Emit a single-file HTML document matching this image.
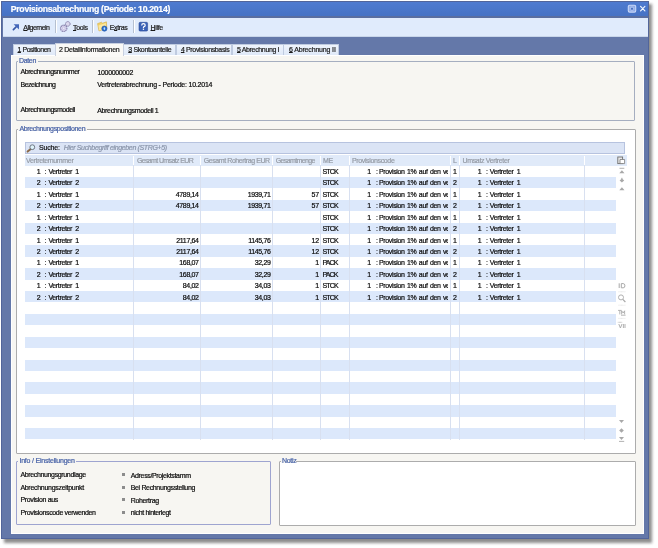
<!DOCTYPE html>
<html><head><meta charset="utf-8"><style>
html,body{margin:0;padding:0;}
body{width:658px;height:548px;position:relative;overflow:hidden;background:#ffffff;font-family:"Liberation Sans",sans-serif;}
.r{position:absolute;}
.t{position:absolute;white-space:pre;-webkit-text-stroke:0.2px currentColor;}
u{text-decoration:underline;text-underline-offset:0.3px;text-decoration-thickness:1px;}
#w{position:absolute;left:0;top:0;width:658px;height:548px;will-change:transform;}
</style></head><body><div id="w">
<div class="r" style="left:4.00px;top:4.00px;width:648.00px;height:539.00px;background:#707070;filter:blur(1.6px);opacity:.8"></div>
<div class="r" style="left:1.00px;top:1.00px;width:648.00px;height:538.00px;background:#6478a9;border:1px solid #52659a;box-sizing:border-box"></div>
<div class="r" style="left:2.00px;top:2.00px;width:646.00px;height:14.00px;background:linear-gradient(#4f7bd0,#4672c4)"></div>
<div class="r" style="left:2.00px;top:16.00px;width:646.00px;height:1.50px;background:#5a6ea0"></div>
<div class="t" style="left:10.80px;top:4.54px;font-size:8.7px;line-height:8.7px;color:#ffffff;letter-spacing:-0.3px;font-weight:bold">Provisionsabrechnung (Periode: 10.2014)</div>
<div class="r" style="left:3.00px;top:17.50px;width:645.00px;height:18.00px;background:#e0ebfc"></div>
<div class="r" style="left:3.00px;top:35.50px;width:645.00px;height:1.00px;background:#c9d6ea"></div>
<div class="r" style="left:55.00px;top:19.60px;width:1.00px;height:13.20px;background:#b6c0d0;box-shadow:1px 0 0 #ffffff"></div>
<div class="r" style="left:92.20px;top:19.60px;width:1.00px;height:13.20px;background:#b6c0d0;box-shadow:1px 0 0 #ffffff"></div>
<div class="r" style="left:133.00px;top:19.60px;width:1.00px;height:13.20px;background:#b6c0d0;box-shadow:1px 0 0 #ffffff"></div>
<div class="t" style="left:23.30px;top:23.57px;font-size:7.0px;line-height:7.0px;color:#1a1a1a;letter-spacing:-0.51px"><u>A</u>llgemein</div>
<div class="t" style="left:73.00px;top:23.57px;font-size:7.0px;line-height:7.0px;color:#1a1a1a;letter-spacing:-0.35px"><u>T</u>ools</div>
<div class="t" style="left:109.75px;top:23.57px;font-size:7.0px;line-height:7.0px;color:#1a1a1a;letter-spacing:-0.35px">E<u>x</u>tras</div>
<div class="t" style="left:150.50px;top:23.57px;font-size:7.0px;line-height:7.0px;color:#1a1a1a;letter-spacing:-0.35px"><u>H</u>ilfe</div>
<div class="r" style="left:12.50px;top:44.25px;width:43.00px;height:11.25px;background:linear-gradient(#eef4fc,#dfe9f8);border:1px solid #bfcbe0;border-bottom:1px solid #c3c9d4;box-sizing:border-box"></div>
<div class="t" style="left:17.50px;top:46.42px;font-size:7.0px;line-height:7.0px;color:#1a1a1a;letter-spacing:-0.46px"><u>1</u> Positionen</div>
<div class="r" style="left:123.00px;top:44.25px;width:53.30px;height:11.25px;background:linear-gradient(#eef4fc,#dfe9f8);border:1px solid #bfcbe0;border-bottom:1px solid #c3c9d4;box-sizing:border-box"></div>
<div class="t" style="left:128.25px;top:46.42px;font-size:7.0px;line-height:7.0px;color:#1a1a1a;letter-spacing:-0.35px"><u>3</u> Skontoanteile</div>
<div class="r" style="left:176.00px;top:44.25px;width:55.80px;height:11.25px;background:linear-gradient(#eef4fc,#dfe9f8);border:1px solid #bfcbe0;border-bottom:1px solid #c3c9d4;box-sizing:border-box"></div>
<div class="t" style="left:180.90px;top:46.42px;font-size:7.0px;line-height:7.0px;color:#1a1a1a;letter-spacing:-0.35px"><u>4</u> Provisionsbasis</div>
<div class="r" style="left:231.50px;top:44.25px;width:52.00px;height:11.25px;background:linear-gradient(#eef4fc,#dfe9f8);border:1px solid #bfcbe0;border-bottom:1px solid #c3c9d4;box-sizing:border-box"></div>
<div class="t" style="left:237.00px;top:46.42px;font-size:7.0px;line-height:7.0px;color:#1a1a1a;letter-spacing:-0.35px"><u>5</u> Abrechnung I</div>
<div class="r" style="left:283.20px;top:44.25px;width:55.80px;height:11.25px;background:linear-gradient(#eef4fc,#dfe9f8);border:1px solid #bfcbe0;border-bottom:1px solid #c3c9d4;box-sizing:border-box"></div>
<div class="t" style="left:289.00px;top:46.42px;font-size:7.0px;line-height:7.0px;color:#1a1a1a;letter-spacing:-0.157px"><u>6</u> Abrechnung II</div>
<div class="r" style="left:11.00px;top:55.00px;width:633.00px;height:479.00px;background:#f7f6f2;border:1px solid #ffffff;box-sizing:border-box"></div>
<div class="r" style="left:55.00px;top:43.00px;width:68.50px;height:13.00px;background:#faf9f6;border:1px solid #c8d0e0;border-bottom:none;box-sizing:border-box"></div>
<div class="t" style="left:59.00px;top:45.67px;font-size:7.0px;line-height:7.0px;color:#1a1a1a;letter-spacing:-0.275px">2 Detailinformationen</div>
<div class="r" style="left:56.00px;top:54.00px;width:67.00px;height:3.00px;background:#faf9f6"></div>
<div class="r" style="left:16.25px;top:61.00px;width:618.75px;height:60.20px;border:1px solid #a5aec0;border-radius:1px;box-sizing:border-box"></div>
<div class="r" style="left:18.00px;top:58.00px;width:19.50px;height:5.00px;background:#f7f6f2"></div>
<div class="t" style="left:19.00px;top:57.07px;font-size:7.0px;line-height:7.0px;color:#4560a6;letter-spacing:-0.35px">Daten</div>
<div class="t" style="left:20.60px;top:68.07px;font-size:7.0px;line-height:7.0px;color:#0a0a0a;letter-spacing:-0.475px">Abrechnungsnummer</div>
<div class="t" style="left:97.50px;top:68.77px;font-size:7.0px;line-height:7.0px;color:#0a0a0a;letter-spacing:-0.35px">1000000002</div>
<div class="t" style="left:20.50px;top:81.07px;font-size:7.0px;line-height:7.0px;color:#0a0a0a;letter-spacing:-0.5px">Bezeichnung</div>
<div class="t" style="left:97.25px;top:81.17px;font-size:7.0px;line-height:7.0px;color:#0a0a0a;letter-spacing:-0.22px">Vertreterabrechnung - Periode: 10.2014</div>
<div class="t" style="left:20.60px;top:106.37px;font-size:7.0px;line-height:7.0px;color:#0a0a0a;letter-spacing:-0.45px">Abrechnungsmodell</div>
<div class="t" style="left:97.25px;top:106.57px;font-size:7.0px;line-height:7.0px;color:#0a0a0a;letter-spacing:-0.35px">Abrechnungsmodell 1</div>
<div class="r" style="left:16.00px;top:129.20px;width:619.80px;height:324.40px;background:#ffffff;border:1px solid #acacac;border-radius:1px;box-sizing:border-box"></div>
<div class="r" style="left:18.00px;top:125.00px;width:68.50px;height:5.50px;background:#f7f6f2"></div>
<div class="t" style="left:19.40px;top:124.97px;font-size:7.0px;line-height:7.0px;color:#4560a6;letter-spacing:-0.35px">Abrechnungspositionen</div>
<div class="r" style="left:24.75px;top:142.00px;width:600.65px;height:12.00px;background:#dbe4f5;border:1px solid #b7c3df;box-sizing:border-box"></div>
<div class="t" style="left:39.10px;top:144.07px;font-size:7.0px;line-height:7.0px;color:#111111;letter-spacing:-0.2px">Suche:</div>
<div class="t" style="left:63.75px;top:144.37px;font-size:7.0px;line-height:7.0px;color:#8a95aa;letter-spacing:-0.35px;font-style:italic">Hier Suchbegriff eingeben (STRG+5)</div>
<div class="r" style="left:24.90px;top:155.00px;width:602.10px;height:10.60px;background:#e0eaf9"></div>
<div class="r" style="left:133.00px;top:156.00px;width:1.00px;height:9.60px;background:#ffffff"></div>
<div class="r" style="left:200.00px;top:156.00px;width:1.00px;height:9.60px;background:#ffffff"></div>
<div class="r" style="left:272.00px;top:156.00px;width:1.00px;height:9.60px;background:#ffffff"></div>
<div class="r" style="left:320.00px;top:156.00px;width:1.00px;height:9.60px;background:#ffffff"></div>
<div class="r" style="left:349.00px;top:156.00px;width:1.00px;height:9.60px;background:#ffffff"></div>
<div class="r" style="left:450.00px;top:156.00px;width:1.00px;height:9.60px;background:#ffffff"></div>
<div class="r" style="left:459.00px;top:156.00px;width:1.00px;height:9.60px;background:#ffffff"></div>
<div class="r" style="left:584.00px;top:156.00px;width:1.00px;height:9.60px;background:#ffffff"></div>
<div class="t" style="left:26.10px;top:156.67px;font-size:7.0px;line-height:7.0px;color:#959ba5;letter-spacing:-0.35px">Vertreternummer</div>
<div class="t" style="left:136.90px;top:156.67px;font-size:7.0px;line-height:7.0px;color:#959ba5;letter-spacing:-0.63px">Gesamt Umsatz EUR</div>
<div class="t" style="left:203.75px;top:156.67px;font-size:7.0px;line-height:7.0px;color:#959ba5;letter-spacing:-0.42px">Gesamt Rohertrag EUR</div>
<div class="t" style="left:275.75px;top:156.67px;font-size:7.0px;line-height:7.0px;color:#959ba5;letter-spacing:-0.615px">Gesamtmenge</div>
<div class="t" style="left:323.00px;top:156.67px;font-size:7.0px;line-height:7.0px;color:#959ba5;letter-spacing:-0.35px">ME</div>
<div class="t" style="left:351.90px;top:156.67px;font-size:7.0px;line-height:7.0px;color:#959ba5;letter-spacing:-0.35px">Provisionscode</div>
<div class="t" style="left:453.10px;top:156.67px;font-size:7.0px;line-height:7.0px;color:#959ba5;letter-spacing:-0.35px">L</div>
<div class="t" style="left:462.50px;top:156.67px;font-size:7.0px;line-height:7.0px;color:#959ba5;letter-spacing:-0.35px">Umsatz Vertreter</div>
<div class="r" style="left:24.90px;top:176.82px;width:591.10px;height:11.42px;background:#dce8fb"></div>
<div class="r" style="left:24.90px;top:199.66px;width:591.10px;height:11.42px;background:#dce8fb"></div>
<div class="r" style="left:24.90px;top:222.50px;width:591.10px;height:11.42px;background:#dce8fb"></div>
<div class="r" style="left:24.90px;top:245.34px;width:591.10px;height:11.42px;background:#dce8fb"></div>
<div class="r" style="left:24.90px;top:268.18px;width:591.10px;height:11.42px;background:#dce8fb"></div>
<div class="r" style="left:24.90px;top:291.02px;width:591.10px;height:11.42px;background:#dce8fb"></div>
<div class="r" style="left:24.90px;top:313.86px;width:591.10px;height:11.42px;background:#dce8fb"></div>
<div class="r" style="left:24.90px;top:336.70px;width:591.10px;height:11.42px;background:#dce8fb"></div>
<div class="r" style="left:24.90px;top:359.54px;width:591.10px;height:11.42px;background:#dce8fb"></div>
<div class="r" style="left:24.90px;top:382.38px;width:591.10px;height:11.42px;background:#dce8fb"></div>
<div class="r" style="left:24.90px;top:405.22px;width:591.10px;height:11.42px;background:#dce8fb"></div>
<div class="r" style="left:24.90px;top:428.06px;width:591.10px;height:11.42px;background:#dce8fb"></div>
<div class="r" style="left:133.00px;top:165.40px;width:1.00px;height:275.10px;background:#d8e0f0"></div>
<div class="r" style="left:200.00px;top:165.40px;width:1.00px;height:275.10px;background:#d8e0f0"></div>
<div class="r" style="left:272.00px;top:165.40px;width:1.00px;height:275.10px;background:#d8e0f0"></div>
<div class="r" style="left:320.00px;top:165.40px;width:1.00px;height:275.10px;background:#d8e0f0"></div>
<div class="r" style="left:349.00px;top:165.40px;width:1.00px;height:275.10px;background:#d8e0f0"></div>
<div class="r" style="left:450.00px;top:165.40px;width:1.00px;height:275.10px;background:#d8e0f0"></div>
<div class="r" style="left:459.00px;top:165.40px;width:1.00px;height:275.10px;background:#d8e0f0"></div>
<div class="r" style="left:584.00px;top:165.40px;width:1.00px;height:275.10px;background:#d8e0f0"></div>
<div class="t" style="right:617.60px;top:168.07px;font-size:7.0px;line-height:7.0px;color:#0a0a0a;letter-spacing:-0.35px;text-align:right">1</div>
<div class="t" style="left:44.60px;top:168.07px;font-size:7.0px;line-height:7.0px;color:#0a0a0a;letter-spacing:-0.35px">:</div>
<div class="t" style="left:48.40px;top:168.07px;font-size:7.0px;line-height:7.0px;color:#0a0a0a;letter-spacing:-0.35px;word-spacing:1.6px">Vertreter 1</div>
<div class="t" style="left:322.40px;top:168.07px;font-size:7.0px;line-height:7.0px;color:#0a0a0a;letter-spacing:-0.8px">STCK</div>
<div class="t" style="right:287.20px;top:168.07px;font-size:7.0px;line-height:7.0px;color:#0a0a0a;letter-spacing:-0.35px;text-align:right">1</div>
<div class="t" style="left:376.00px;top:168.07px;font-size:7.0px;line-height:7.0px;color:#0a0a0a;letter-spacing:-0.35px">:</div>
<div class="t" style="left:379px;top:168.07px;width:69px;overflow:hidden;font-size:7.0px;line-height:7.0px;color:#0a0a0a;letter-spacing:-0.35px;word-spacing:0.8px">Provision 1% auf den verkauften Umsatz</div>
<div class="t" style="left:453.00px;top:168.07px;font-size:7.0px;line-height:7.0px;color:#0a0a0a;letter-spacing:-0.35px">1</div>
<div class="t" style="right:176.70px;top:168.07px;font-size:7.0px;line-height:7.0px;color:#0a0a0a;letter-spacing:-0.35px;text-align:right">1</div>
<div class="t" style="left:486.00px;top:168.07px;font-size:7.0px;line-height:7.0px;color:#0a0a0a;letter-spacing:-0.35px">:</div>
<div class="t" style="left:489.80px;top:168.07px;font-size:7.0px;line-height:7.0px;color:#0a0a0a;letter-spacing:-0.35px;word-spacing:1.6px">Vertreter 1</div>
<div class="t" style="right:617.60px;top:179.49px;font-size:7.0px;line-height:7.0px;color:#0a0a0a;letter-spacing:-0.35px;text-align:right">2</div>
<div class="t" style="left:44.60px;top:179.49px;font-size:7.0px;line-height:7.0px;color:#0a0a0a;letter-spacing:-0.35px">:</div>
<div class="t" style="left:48.40px;top:179.49px;font-size:7.0px;line-height:7.0px;color:#0a0a0a;letter-spacing:-0.35px;word-spacing:1.6px">Vertreter 2</div>
<div class="t" style="left:322.40px;top:179.49px;font-size:7.0px;line-height:7.0px;color:#0a0a0a;letter-spacing:-0.8px">STCK</div>
<div class="t" style="right:287.20px;top:179.49px;font-size:7.0px;line-height:7.0px;color:#0a0a0a;letter-spacing:-0.35px;text-align:right">1</div>
<div class="t" style="left:376.00px;top:179.49px;font-size:7.0px;line-height:7.0px;color:#0a0a0a;letter-spacing:-0.35px">:</div>
<div class="t" style="left:379px;top:179.49px;width:69px;overflow:hidden;font-size:7.0px;line-height:7.0px;color:#0a0a0a;letter-spacing:-0.35px;word-spacing:0.8px">Provision 1% auf den verkauften Umsatz</div>
<div class="t" style="left:453.00px;top:179.49px;font-size:7.0px;line-height:7.0px;color:#0a0a0a;letter-spacing:-0.35px">2</div>
<div class="t" style="right:176.70px;top:179.49px;font-size:7.0px;line-height:7.0px;color:#0a0a0a;letter-spacing:-0.35px;text-align:right">1</div>
<div class="t" style="left:486.00px;top:179.49px;font-size:7.0px;line-height:7.0px;color:#0a0a0a;letter-spacing:-0.35px">:</div>
<div class="t" style="left:489.80px;top:179.49px;font-size:7.0px;line-height:7.0px;color:#0a0a0a;letter-spacing:-0.35px;word-spacing:1.6px">Vertreter 1</div>
<div class="t" style="right:617.60px;top:190.91px;font-size:7.0px;line-height:7.0px;color:#0a0a0a;letter-spacing:-0.35px;text-align:right">1</div>
<div class="t" style="left:44.60px;top:190.91px;font-size:7.0px;line-height:7.0px;color:#0a0a0a;letter-spacing:-0.35px">:</div>
<div class="t" style="left:48.40px;top:190.91px;font-size:7.0px;line-height:7.0px;color:#0a0a0a;letter-spacing:-0.35px;word-spacing:1.6px">Vertreter 1</div>
<div class="t" style="right:459.40px;top:190.91px;font-size:7.0px;line-height:7.0px;color:#0a0a0a;letter-spacing:-0.35px;text-align:right">4789,14</div>
<div class="t" style="right:387.50px;top:190.91px;font-size:7.0px;line-height:7.0px;color:#0a0a0a;letter-spacing:-0.35px;text-align:right">1939,71</div>
<div class="t" style="right:339.30px;top:190.91px;font-size:7.0px;line-height:7.0px;color:#0a0a0a;letter-spacing:-0.35px;text-align:right">57</div>
<div class="t" style="left:322.40px;top:190.91px;font-size:7.0px;line-height:7.0px;color:#0a0a0a;letter-spacing:-0.8px">STCK</div>
<div class="t" style="right:287.20px;top:190.91px;font-size:7.0px;line-height:7.0px;color:#0a0a0a;letter-spacing:-0.35px;text-align:right">1</div>
<div class="t" style="left:376.00px;top:190.91px;font-size:7.0px;line-height:7.0px;color:#0a0a0a;letter-spacing:-0.35px">:</div>
<div class="t" style="left:379px;top:190.91px;width:69px;overflow:hidden;font-size:7.0px;line-height:7.0px;color:#0a0a0a;letter-spacing:-0.35px;word-spacing:0.8px">Provision 1% auf den verkauften Umsatz</div>
<div class="t" style="left:453.00px;top:190.91px;font-size:7.0px;line-height:7.0px;color:#0a0a0a;letter-spacing:-0.35px">1</div>
<div class="t" style="right:176.70px;top:190.91px;font-size:7.0px;line-height:7.0px;color:#0a0a0a;letter-spacing:-0.35px;text-align:right">1</div>
<div class="t" style="left:486.00px;top:190.91px;font-size:7.0px;line-height:7.0px;color:#0a0a0a;letter-spacing:-0.35px">:</div>
<div class="t" style="left:489.80px;top:190.91px;font-size:7.0px;line-height:7.0px;color:#0a0a0a;letter-spacing:-0.35px;word-spacing:1.6px">Vertreter 1</div>
<div class="t" style="right:617.60px;top:202.33px;font-size:7.0px;line-height:7.0px;color:#0a0a0a;letter-spacing:-0.35px;text-align:right">2</div>
<div class="t" style="left:44.60px;top:202.33px;font-size:7.0px;line-height:7.0px;color:#0a0a0a;letter-spacing:-0.35px">:</div>
<div class="t" style="left:48.40px;top:202.33px;font-size:7.0px;line-height:7.0px;color:#0a0a0a;letter-spacing:-0.35px;word-spacing:1.6px">Vertreter 2</div>
<div class="t" style="right:459.40px;top:202.33px;font-size:7.0px;line-height:7.0px;color:#0a0a0a;letter-spacing:-0.35px;text-align:right">4789,14</div>
<div class="t" style="right:387.50px;top:202.33px;font-size:7.0px;line-height:7.0px;color:#0a0a0a;letter-spacing:-0.35px;text-align:right">1939,71</div>
<div class="t" style="right:339.30px;top:202.33px;font-size:7.0px;line-height:7.0px;color:#0a0a0a;letter-spacing:-0.35px;text-align:right">57</div>
<div class="t" style="left:322.40px;top:202.33px;font-size:7.0px;line-height:7.0px;color:#0a0a0a;letter-spacing:-0.8px">STCK</div>
<div class="t" style="right:287.20px;top:202.33px;font-size:7.0px;line-height:7.0px;color:#0a0a0a;letter-spacing:-0.35px;text-align:right">1</div>
<div class="t" style="left:376.00px;top:202.33px;font-size:7.0px;line-height:7.0px;color:#0a0a0a;letter-spacing:-0.35px">:</div>
<div class="t" style="left:379px;top:202.33px;width:69px;overflow:hidden;font-size:7.0px;line-height:7.0px;color:#0a0a0a;letter-spacing:-0.35px;word-spacing:0.8px">Provision 1% auf den verkauften Umsatz</div>
<div class="t" style="left:453.00px;top:202.33px;font-size:7.0px;line-height:7.0px;color:#0a0a0a;letter-spacing:-0.35px">2</div>
<div class="t" style="right:176.70px;top:202.33px;font-size:7.0px;line-height:7.0px;color:#0a0a0a;letter-spacing:-0.35px;text-align:right">1</div>
<div class="t" style="left:486.00px;top:202.33px;font-size:7.0px;line-height:7.0px;color:#0a0a0a;letter-spacing:-0.35px">:</div>
<div class="t" style="left:489.80px;top:202.33px;font-size:7.0px;line-height:7.0px;color:#0a0a0a;letter-spacing:-0.35px;word-spacing:1.6px">Vertreter 1</div>
<div class="t" style="right:617.60px;top:213.75px;font-size:7.0px;line-height:7.0px;color:#0a0a0a;letter-spacing:-0.35px;text-align:right">1</div>
<div class="t" style="left:44.60px;top:213.75px;font-size:7.0px;line-height:7.0px;color:#0a0a0a;letter-spacing:-0.35px">:</div>
<div class="t" style="left:48.40px;top:213.75px;font-size:7.0px;line-height:7.0px;color:#0a0a0a;letter-spacing:-0.35px;word-spacing:1.6px">Vertreter 1</div>
<div class="t" style="left:322.40px;top:213.75px;font-size:7.0px;line-height:7.0px;color:#0a0a0a;letter-spacing:-0.8px">STCK</div>
<div class="t" style="right:287.20px;top:213.75px;font-size:7.0px;line-height:7.0px;color:#0a0a0a;letter-spacing:-0.35px;text-align:right">1</div>
<div class="t" style="left:376.00px;top:213.75px;font-size:7.0px;line-height:7.0px;color:#0a0a0a;letter-spacing:-0.35px">:</div>
<div class="t" style="left:379px;top:213.75px;width:69px;overflow:hidden;font-size:7.0px;line-height:7.0px;color:#0a0a0a;letter-spacing:-0.35px;word-spacing:0.8px">Provision 1% auf den verkauften Umsatz</div>
<div class="t" style="left:453.00px;top:213.75px;font-size:7.0px;line-height:7.0px;color:#0a0a0a;letter-spacing:-0.35px">1</div>
<div class="t" style="right:176.70px;top:213.75px;font-size:7.0px;line-height:7.0px;color:#0a0a0a;letter-spacing:-0.35px;text-align:right">1</div>
<div class="t" style="left:486.00px;top:213.75px;font-size:7.0px;line-height:7.0px;color:#0a0a0a;letter-spacing:-0.35px">:</div>
<div class="t" style="left:489.80px;top:213.75px;font-size:7.0px;line-height:7.0px;color:#0a0a0a;letter-spacing:-0.35px;word-spacing:1.6px">Vertreter 1</div>
<div class="t" style="right:617.60px;top:225.17px;font-size:7.0px;line-height:7.0px;color:#0a0a0a;letter-spacing:-0.35px;text-align:right">2</div>
<div class="t" style="left:44.60px;top:225.17px;font-size:7.0px;line-height:7.0px;color:#0a0a0a;letter-spacing:-0.35px">:</div>
<div class="t" style="left:48.40px;top:225.17px;font-size:7.0px;line-height:7.0px;color:#0a0a0a;letter-spacing:-0.35px;word-spacing:1.6px">Vertreter 2</div>
<div class="t" style="left:322.40px;top:225.17px;font-size:7.0px;line-height:7.0px;color:#0a0a0a;letter-spacing:-0.8px">STCK</div>
<div class="t" style="right:287.20px;top:225.17px;font-size:7.0px;line-height:7.0px;color:#0a0a0a;letter-spacing:-0.35px;text-align:right">1</div>
<div class="t" style="left:376.00px;top:225.17px;font-size:7.0px;line-height:7.0px;color:#0a0a0a;letter-spacing:-0.35px">:</div>
<div class="t" style="left:379px;top:225.17px;width:69px;overflow:hidden;font-size:7.0px;line-height:7.0px;color:#0a0a0a;letter-spacing:-0.35px;word-spacing:0.8px">Provision 1% auf den verkauften Umsatz</div>
<div class="t" style="left:453.00px;top:225.17px;font-size:7.0px;line-height:7.0px;color:#0a0a0a;letter-spacing:-0.35px">2</div>
<div class="t" style="right:176.70px;top:225.17px;font-size:7.0px;line-height:7.0px;color:#0a0a0a;letter-spacing:-0.35px;text-align:right">1</div>
<div class="t" style="left:486.00px;top:225.17px;font-size:7.0px;line-height:7.0px;color:#0a0a0a;letter-spacing:-0.35px">:</div>
<div class="t" style="left:489.80px;top:225.17px;font-size:7.0px;line-height:7.0px;color:#0a0a0a;letter-spacing:-0.35px;word-spacing:1.6px">Vertreter 1</div>
<div class="t" style="right:617.60px;top:236.59px;font-size:7.0px;line-height:7.0px;color:#0a0a0a;letter-spacing:-0.35px;text-align:right">1</div>
<div class="t" style="left:44.60px;top:236.59px;font-size:7.0px;line-height:7.0px;color:#0a0a0a;letter-spacing:-0.35px">:</div>
<div class="t" style="left:48.40px;top:236.59px;font-size:7.0px;line-height:7.0px;color:#0a0a0a;letter-spacing:-0.35px;word-spacing:1.6px">Vertreter 1</div>
<div class="t" style="right:459.40px;top:236.59px;font-size:7.0px;line-height:7.0px;color:#0a0a0a;letter-spacing:-0.35px;text-align:right">2117,64</div>
<div class="t" style="right:387.50px;top:236.59px;font-size:7.0px;line-height:7.0px;color:#0a0a0a;letter-spacing:-0.35px;text-align:right">1145,76</div>
<div class="t" style="right:339.30px;top:236.59px;font-size:7.0px;line-height:7.0px;color:#0a0a0a;letter-spacing:-0.35px;text-align:right">12</div>
<div class="t" style="left:322.40px;top:236.59px;font-size:7.0px;line-height:7.0px;color:#0a0a0a;letter-spacing:-0.8px">STCK</div>
<div class="t" style="right:287.20px;top:236.59px;font-size:7.0px;line-height:7.0px;color:#0a0a0a;letter-spacing:-0.35px;text-align:right">1</div>
<div class="t" style="left:376.00px;top:236.59px;font-size:7.0px;line-height:7.0px;color:#0a0a0a;letter-spacing:-0.35px">:</div>
<div class="t" style="left:379px;top:236.59px;width:69px;overflow:hidden;font-size:7.0px;line-height:7.0px;color:#0a0a0a;letter-spacing:-0.35px;word-spacing:0.8px">Provision 1% auf den verkauften Umsatz</div>
<div class="t" style="left:453.00px;top:236.59px;font-size:7.0px;line-height:7.0px;color:#0a0a0a;letter-spacing:-0.35px">1</div>
<div class="t" style="right:176.70px;top:236.59px;font-size:7.0px;line-height:7.0px;color:#0a0a0a;letter-spacing:-0.35px;text-align:right">1</div>
<div class="t" style="left:486.00px;top:236.59px;font-size:7.0px;line-height:7.0px;color:#0a0a0a;letter-spacing:-0.35px">:</div>
<div class="t" style="left:489.80px;top:236.59px;font-size:7.0px;line-height:7.0px;color:#0a0a0a;letter-spacing:-0.35px;word-spacing:1.6px">Vertreter 1</div>
<div class="t" style="right:617.60px;top:248.01px;font-size:7.0px;line-height:7.0px;color:#0a0a0a;letter-spacing:-0.35px;text-align:right">2</div>
<div class="t" style="left:44.60px;top:248.01px;font-size:7.0px;line-height:7.0px;color:#0a0a0a;letter-spacing:-0.35px">:</div>
<div class="t" style="left:48.40px;top:248.01px;font-size:7.0px;line-height:7.0px;color:#0a0a0a;letter-spacing:-0.35px;word-spacing:1.6px">Vertreter 2</div>
<div class="t" style="right:459.40px;top:248.01px;font-size:7.0px;line-height:7.0px;color:#0a0a0a;letter-spacing:-0.35px;text-align:right">2117,64</div>
<div class="t" style="right:387.50px;top:248.01px;font-size:7.0px;line-height:7.0px;color:#0a0a0a;letter-spacing:-0.35px;text-align:right">1145,76</div>
<div class="t" style="right:339.30px;top:248.01px;font-size:7.0px;line-height:7.0px;color:#0a0a0a;letter-spacing:-0.35px;text-align:right">12</div>
<div class="t" style="left:322.40px;top:248.01px;font-size:7.0px;line-height:7.0px;color:#0a0a0a;letter-spacing:-0.8px">STCK</div>
<div class="t" style="right:287.20px;top:248.01px;font-size:7.0px;line-height:7.0px;color:#0a0a0a;letter-spacing:-0.35px;text-align:right">1</div>
<div class="t" style="left:376.00px;top:248.01px;font-size:7.0px;line-height:7.0px;color:#0a0a0a;letter-spacing:-0.35px">:</div>
<div class="t" style="left:379px;top:248.01px;width:69px;overflow:hidden;font-size:7.0px;line-height:7.0px;color:#0a0a0a;letter-spacing:-0.35px;word-spacing:0.8px">Provision 1% auf den verkauften Umsatz</div>
<div class="t" style="left:453.00px;top:248.01px;font-size:7.0px;line-height:7.0px;color:#0a0a0a;letter-spacing:-0.35px">2</div>
<div class="t" style="right:176.70px;top:248.01px;font-size:7.0px;line-height:7.0px;color:#0a0a0a;letter-spacing:-0.35px;text-align:right">1</div>
<div class="t" style="left:486.00px;top:248.01px;font-size:7.0px;line-height:7.0px;color:#0a0a0a;letter-spacing:-0.35px">:</div>
<div class="t" style="left:489.80px;top:248.01px;font-size:7.0px;line-height:7.0px;color:#0a0a0a;letter-spacing:-0.35px;word-spacing:1.6px">Vertreter 1</div>
<div class="t" style="right:617.60px;top:259.43px;font-size:7.0px;line-height:7.0px;color:#0a0a0a;letter-spacing:-0.35px;text-align:right">1</div>
<div class="t" style="left:44.60px;top:259.43px;font-size:7.0px;line-height:7.0px;color:#0a0a0a;letter-spacing:-0.35px">:</div>
<div class="t" style="left:48.40px;top:259.43px;font-size:7.0px;line-height:7.0px;color:#0a0a0a;letter-spacing:-0.35px;word-spacing:1.6px">Vertreter 1</div>
<div class="t" style="right:459.40px;top:259.43px;font-size:7.0px;line-height:7.0px;color:#0a0a0a;letter-spacing:-0.35px;text-align:right">168,07</div>
<div class="t" style="right:387.50px;top:259.43px;font-size:7.0px;line-height:7.0px;color:#0a0a0a;letter-spacing:-0.35px;text-align:right">32,29</div>
<div class="t" style="right:339.30px;top:259.43px;font-size:7.0px;line-height:7.0px;color:#0a0a0a;letter-spacing:-0.35px;text-align:right">1</div>
<div class="t" style="left:322.40px;top:259.43px;font-size:7.0px;line-height:7.0px;color:#0a0a0a;letter-spacing:-0.8px">PACK</div>
<div class="t" style="right:287.20px;top:259.43px;font-size:7.0px;line-height:7.0px;color:#0a0a0a;letter-spacing:-0.35px;text-align:right">1</div>
<div class="t" style="left:376.00px;top:259.43px;font-size:7.0px;line-height:7.0px;color:#0a0a0a;letter-spacing:-0.35px">:</div>
<div class="t" style="left:379px;top:259.43px;width:69px;overflow:hidden;font-size:7.0px;line-height:7.0px;color:#0a0a0a;letter-spacing:-0.35px;word-spacing:0.8px">Provision 1% auf den verkauften Umsatz</div>
<div class="t" style="left:453.00px;top:259.43px;font-size:7.0px;line-height:7.0px;color:#0a0a0a;letter-spacing:-0.35px">1</div>
<div class="t" style="right:176.70px;top:259.43px;font-size:7.0px;line-height:7.0px;color:#0a0a0a;letter-spacing:-0.35px;text-align:right">1</div>
<div class="t" style="left:486.00px;top:259.43px;font-size:7.0px;line-height:7.0px;color:#0a0a0a;letter-spacing:-0.35px">:</div>
<div class="t" style="left:489.80px;top:259.43px;font-size:7.0px;line-height:7.0px;color:#0a0a0a;letter-spacing:-0.35px;word-spacing:1.6px">Vertreter 1</div>
<div class="t" style="right:617.60px;top:270.85px;font-size:7.0px;line-height:7.0px;color:#0a0a0a;letter-spacing:-0.35px;text-align:right">2</div>
<div class="t" style="left:44.60px;top:270.85px;font-size:7.0px;line-height:7.0px;color:#0a0a0a;letter-spacing:-0.35px">:</div>
<div class="t" style="left:48.40px;top:270.85px;font-size:7.0px;line-height:7.0px;color:#0a0a0a;letter-spacing:-0.35px;word-spacing:1.6px">Vertreter 2</div>
<div class="t" style="right:459.40px;top:270.85px;font-size:7.0px;line-height:7.0px;color:#0a0a0a;letter-spacing:-0.35px;text-align:right">168,07</div>
<div class="t" style="right:387.50px;top:270.85px;font-size:7.0px;line-height:7.0px;color:#0a0a0a;letter-spacing:-0.35px;text-align:right">32,29</div>
<div class="t" style="right:339.30px;top:270.85px;font-size:7.0px;line-height:7.0px;color:#0a0a0a;letter-spacing:-0.35px;text-align:right">1</div>
<div class="t" style="left:322.40px;top:270.85px;font-size:7.0px;line-height:7.0px;color:#0a0a0a;letter-spacing:-0.8px">PACK</div>
<div class="t" style="right:287.20px;top:270.85px;font-size:7.0px;line-height:7.0px;color:#0a0a0a;letter-spacing:-0.35px;text-align:right">1</div>
<div class="t" style="left:376.00px;top:270.85px;font-size:7.0px;line-height:7.0px;color:#0a0a0a;letter-spacing:-0.35px">:</div>
<div class="t" style="left:379px;top:270.85px;width:69px;overflow:hidden;font-size:7.0px;line-height:7.0px;color:#0a0a0a;letter-spacing:-0.35px;word-spacing:0.8px">Provision 1% auf den verkauften Umsatz</div>
<div class="t" style="left:453.00px;top:270.85px;font-size:7.0px;line-height:7.0px;color:#0a0a0a;letter-spacing:-0.35px">2</div>
<div class="t" style="right:176.70px;top:270.85px;font-size:7.0px;line-height:7.0px;color:#0a0a0a;letter-spacing:-0.35px;text-align:right">1</div>
<div class="t" style="left:486.00px;top:270.85px;font-size:7.0px;line-height:7.0px;color:#0a0a0a;letter-spacing:-0.35px">:</div>
<div class="t" style="left:489.80px;top:270.85px;font-size:7.0px;line-height:7.0px;color:#0a0a0a;letter-spacing:-0.35px;word-spacing:1.6px">Vertreter 1</div>
<div class="t" style="right:617.60px;top:282.27px;font-size:7.0px;line-height:7.0px;color:#0a0a0a;letter-spacing:-0.35px;text-align:right">1</div>
<div class="t" style="left:44.60px;top:282.27px;font-size:7.0px;line-height:7.0px;color:#0a0a0a;letter-spacing:-0.35px">:</div>
<div class="t" style="left:48.40px;top:282.27px;font-size:7.0px;line-height:7.0px;color:#0a0a0a;letter-spacing:-0.35px;word-spacing:1.6px">Vertreter 1</div>
<div class="t" style="right:459.40px;top:282.27px;font-size:7.0px;line-height:7.0px;color:#0a0a0a;letter-spacing:-0.35px;text-align:right">84,02</div>
<div class="t" style="right:387.50px;top:282.27px;font-size:7.0px;line-height:7.0px;color:#0a0a0a;letter-spacing:-0.35px;text-align:right">34,03</div>
<div class="t" style="right:339.30px;top:282.27px;font-size:7.0px;line-height:7.0px;color:#0a0a0a;letter-spacing:-0.35px;text-align:right">1</div>
<div class="t" style="left:322.40px;top:282.27px;font-size:7.0px;line-height:7.0px;color:#0a0a0a;letter-spacing:-0.8px">STCK</div>
<div class="t" style="right:287.20px;top:282.27px;font-size:7.0px;line-height:7.0px;color:#0a0a0a;letter-spacing:-0.35px;text-align:right">1</div>
<div class="t" style="left:376.00px;top:282.27px;font-size:7.0px;line-height:7.0px;color:#0a0a0a;letter-spacing:-0.35px">:</div>
<div class="t" style="left:379px;top:282.27px;width:69px;overflow:hidden;font-size:7.0px;line-height:7.0px;color:#0a0a0a;letter-spacing:-0.35px;word-spacing:0.8px">Provision 1% auf den verkauften Umsatz</div>
<div class="t" style="left:453.00px;top:282.27px;font-size:7.0px;line-height:7.0px;color:#0a0a0a;letter-spacing:-0.35px">1</div>
<div class="t" style="right:176.70px;top:282.27px;font-size:7.0px;line-height:7.0px;color:#0a0a0a;letter-spacing:-0.35px;text-align:right">1</div>
<div class="t" style="left:486.00px;top:282.27px;font-size:7.0px;line-height:7.0px;color:#0a0a0a;letter-spacing:-0.35px">:</div>
<div class="t" style="left:489.80px;top:282.27px;font-size:7.0px;line-height:7.0px;color:#0a0a0a;letter-spacing:-0.35px;word-spacing:1.6px">Vertreter 1</div>
<div class="t" style="right:617.60px;top:293.69px;font-size:7.0px;line-height:7.0px;color:#0a0a0a;letter-spacing:-0.35px;text-align:right">2</div>
<div class="t" style="left:44.60px;top:293.69px;font-size:7.0px;line-height:7.0px;color:#0a0a0a;letter-spacing:-0.35px">:</div>
<div class="t" style="left:48.40px;top:293.69px;font-size:7.0px;line-height:7.0px;color:#0a0a0a;letter-spacing:-0.35px;word-spacing:1.6px">Vertreter 2</div>
<div class="t" style="right:459.40px;top:293.69px;font-size:7.0px;line-height:7.0px;color:#0a0a0a;letter-spacing:-0.35px;text-align:right">84,02</div>
<div class="t" style="right:387.50px;top:293.69px;font-size:7.0px;line-height:7.0px;color:#0a0a0a;letter-spacing:-0.35px;text-align:right">34,03</div>
<div class="t" style="right:339.30px;top:293.69px;font-size:7.0px;line-height:7.0px;color:#0a0a0a;letter-spacing:-0.35px;text-align:right">1</div>
<div class="t" style="left:322.40px;top:293.69px;font-size:7.0px;line-height:7.0px;color:#0a0a0a;letter-spacing:-0.8px">STCK</div>
<div class="t" style="right:287.20px;top:293.69px;font-size:7.0px;line-height:7.0px;color:#0a0a0a;letter-spacing:-0.35px;text-align:right">1</div>
<div class="t" style="left:376.00px;top:293.69px;font-size:7.0px;line-height:7.0px;color:#0a0a0a;letter-spacing:-0.35px">:</div>
<div class="t" style="left:379px;top:293.69px;width:69px;overflow:hidden;font-size:7.0px;line-height:7.0px;color:#0a0a0a;letter-spacing:-0.35px;word-spacing:0.8px">Provision 1% auf den verkauften Umsatz</div>
<div class="t" style="left:453.00px;top:293.69px;font-size:7.0px;line-height:7.0px;color:#0a0a0a;letter-spacing:-0.35px">2</div>
<div class="t" style="right:176.70px;top:293.69px;font-size:7.0px;line-height:7.0px;color:#0a0a0a;letter-spacing:-0.35px;text-align:right">1</div>
<div class="t" style="left:486.00px;top:293.69px;font-size:7.0px;line-height:7.0px;color:#0a0a0a;letter-spacing:-0.35px">:</div>
<div class="t" style="left:489.80px;top:293.69px;font-size:7.0px;line-height:7.0px;color:#0a0a0a;letter-spacing:-0.35px;word-spacing:1.6px">Vertreter 1</div>
<div class="r" style="left:16.00px;top:461.00px;width:255.20px;height:64.00px;border:1px solid #9ea4d0;border-radius:1px;box-sizing:border-box"></div>
<div class="r" style="left:18.00px;top:457.00px;width:58.00px;height:5.50px;background:#f7f6f2"></div>
<div class="t" style="left:19.40px;top:456.97px;font-size:7.0px;line-height:7.0px;color:#4560a6;letter-spacing:-0.21px">Info / Einstellungen</div>
<div class="t" style="left:20.40px;top:471.27px;font-size:7.0px;line-height:7.0px;color:#0a0a0a;letter-spacing:-0.35px">Abrechnungsgrundlage</div>
<div class="r" style="left:122.00px;top:473.00px;width:2.50px;height:2.50px;background:#8c8c8c"></div>
<div class="t" style="left:130.75px;top:471.57px;font-size:7.0px;line-height:7.0px;color:#0a0a0a;letter-spacing:-0.35px">Adress/Projektstamm</div>
<div class="t" style="left:20.40px;top:483.87px;font-size:7.0px;line-height:7.0px;color:#0a0a0a;letter-spacing:-0.29px">Abrechnungszeitpunkt</div>
<div class="r" style="left:122.00px;top:486.00px;width:2.50px;height:2.50px;background:#8c8c8c"></div>
<div class="t" style="left:130.75px;top:484.17px;font-size:7.0px;line-height:7.0px;color:#0a0a0a;letter-spacing:-0.35px">Bei Rechnungsstellung</div>
<div class="t" style="left:20.40px;top:496.37px;font-size:7.0px;line-height:7.0px;color:#0a0a0a;letter-spacing:-0.35px">Provision aus</div>
<div class="r" style="left:122.00px;top:498.00px;width:2.50px;height:2.50px;background:#8c8c8c"></div>
<div class="t" style="left:130.75px;top:496.67px;font-size:7.0px;line-height:7.0px;color:#0a0a0a;letter-spacing:-0.35px">Rohertrag</div>
<div class="t" style="left:20.40px;top:508.87px;font-size:7.0px;line-height:7.0px;color:#0a0a0a;letter-spacing:-0.35px">Provisionscode verwenden</div>
<div class="r" style="left:122.00px;top:511.00px;width:2.50px;height:2.50px;background:#8c8c8c"></div>
<div class="t" style="left:130.75px;top:509.17px;font-size:7.0px;line-height:7.0px;color:#0a0a0a;letter-spacing:-0.35px">nicht hinterlegt</div>
<div class="r" style="left:279.25px;top:461.00px;width:356.55px;height:64.50px;background:#ffffff;border:1px solid #acacac;border-radius:1px;box-sizing:border-box"></div>
<div class="r" style="left:281.00px;top:457.00px;width:15.00px;height:5.50px;background:#f7f6f2"></div>
<div class="t" style="left:282.00px;top:456.97px;font-size:7.0px;line-height:7.0px;color:#4560a6;letter-spacing:-0.3px">Notiz</div>
<svg class="r" style="left:0;top:0" width="658" height="548" viewBox="0 0 658 548"><rect x="628.3" y="5.3" width="7.4" height="6.8" rx="1.3" fill="#8fa9e6" stroke="#c9d8f7" stroke-width="1.1"/><rect x="630.3" y="7.2" width="3.4" height="3" rx="0.6" fill="#4d70c2" stroke="#c0d2f5" stroke-width="0.9"/><path d="M640.6 6.3 L644.9 10.8 M644.9 6.3 L640.6 10.8" stroke="#f4f8ff" stroke-width="1.15" stroke-linecap="round"/><path d="M13.4 29.6 L17 26" stroke="#3557a8" stroke-width="1.7" stroke-linecap="round"/><path d="M13.6 24.2 L19 24.2 L19 29.6 Z" fill="#4468bb"/><circle cx="67.8" cy="23.9" r="2.3" fill="#dcd8ee" stroke="#827ca8" stroke-width="1" stroke-dasharray="1.2 0.5"/><circle cx="63.7" cy="28.3" r="3.2" fill="#d6d2ec" stroke="#827ca8" stroke-width="1.1" stroke-dasharray="1.3 0.6"/><circle cx="63.8" cy="28.2" r="1.2" fill="#f6f4fc" stroke="#aaa3d0" stroke-width="0.5"/><path d="M97.6 23.6 L101.5 22.2 L102.6 23.2 L106.4 21.8 L106.8 28 L99 31 Z" fill="#f2d267" stroke="#d6ad45" stroke-width="0.6"/><path d="M98.4 25.5 L105.8 23 L106.2 28.3 L99.3 30.6 Z" fill="#fbe7a0"/><circle cx="104.4" cy="28.6" r="2.6" fill="#2b6fcf" stroke="#1c4fa0" stroke-width="0.6"/><ellipse cx="104.4" cy="28.6" rx="0.8" ry="1.3" fill="#bfe3ff"/><rect x="139" y="22.3" width="8.6" height="8.8" rx="1.2" fill="#3a61b6" stroke="#2b4c98" stroke-width="0.6"/><path d="M141.7 25.4 Q141.7 23.6 143.4 23.6 Q145.2 23.6 145.2 25.2 Q145.2 26.1 144.1 26.6 Q143.4 27 143.4 27.9" fill="none" stroke="#ffffff" stroke-width="1.2"/><rect x="142.8" y="28.6" width="1.3" height="1.3" fill="#ffffff"/><path d="M30.4 149.2 L27.6 151.6" stroke="#8a6a4a" stroke-width="2" stroke-linecap="round"/><circle cx="32.3" cy="147.2" r="2.4" fill="#dff3fa" stroke="#646c78" stroke-width="0.9"/><rect x="617.8" y="157" width="4.8" height="6.6" fill="#e8e8e8" stroke="#6e6e6e" stroke-width="0.9"/><path d="M620 159.5 H624.6 V163.6 H620 Z" fill="#ffffff" stroke="#7a7a7a" stroke-width="0.8"/><path d="M619.5 168.3 H624.3" stroke="#a8a8a8" stroke-width="0.9"/><path d="M619.3 173.3 L621.9 170.2 L624.5 173.3 Z" fill="#a8a8a8"/><path d="M621.9 178.4 L624.2 180.5 L621.9 182.6 L619.6 180.5 Z" fill="#a8a8a8"/><path d="M621.9 177.8 V179" stroke="#a8a8a8" stroke-width="1"/><path d="M619.3 190.2 L621.9 187.2 L624.5 190.2 Z" fill="#a8a8a8"/><path d="M619.2 283.3 V288 M621.3 283.6 H623.2 Q624.9 283.6 624.9 285.8 Q624.9 287.8 623.2 287.8 H621.3 Z" stroke="#a8a8a8" stroke-width="1" fill="none"/><path d="M618.5 291.8 H625.3" stroke="#cfcfcf" stroke-width="0.6" stroke-dasharray="0.8 0.5"/><circle cx="621" cy="297.4" r="2.5" fill="none" stroke="#a8a8a8" stroke-width="0.9"/><path d="M622.8 299.3 L625.4 302" stroke="#a8a8a8" stroke-width="1.2"/><path d="M618.5 305.2 H625.3" stroke="#cfcfcf" stroke-width="0.6" stroke-dasharray="0.8 0.5"/><path d="M618 310.4 H621.6 M619.8 310.4 V314.4 M621.6 314.4 V310.8 L623.1 313 L624.6 310.8 V314.4 M621 315.2 H625.6" stroke="#a8a8a8" stroke-width="0.85" fill="none"/><path d="M618.5 318.4 H625.3" stroke="#cfcfcf" stroke-width="0.6" stroke-dasharray="0.8 0.5"/><path d="M617.8 322.3 H622.5" stroke="#a8a8a8" stroke-width="0.7" stroke-dasharray="0.8 0.4"/><path d="M618.8 324 L620.4 328 L622 324 M623.4 324 V328 M625 324 V328" stroke="#a8a8a8" stroke-width="0.9" fill="none"/><path d="M619 420 L624 420 L621.5 423 Z" fill="#a8a8a8"/><path d="M621.5 428.3 L623.8 430.5 L621.5 432.7 L619.2 430.5 Z" fill="#a8a8a8"/><path d="M619 437 L624 437 L621.5 440 Z" fill="#a8a8a8"/><path d="M619 441.4 H624.2" stroke="#a8a8a8" stroke-width="0.9"/></svg>
</div></body></html>
